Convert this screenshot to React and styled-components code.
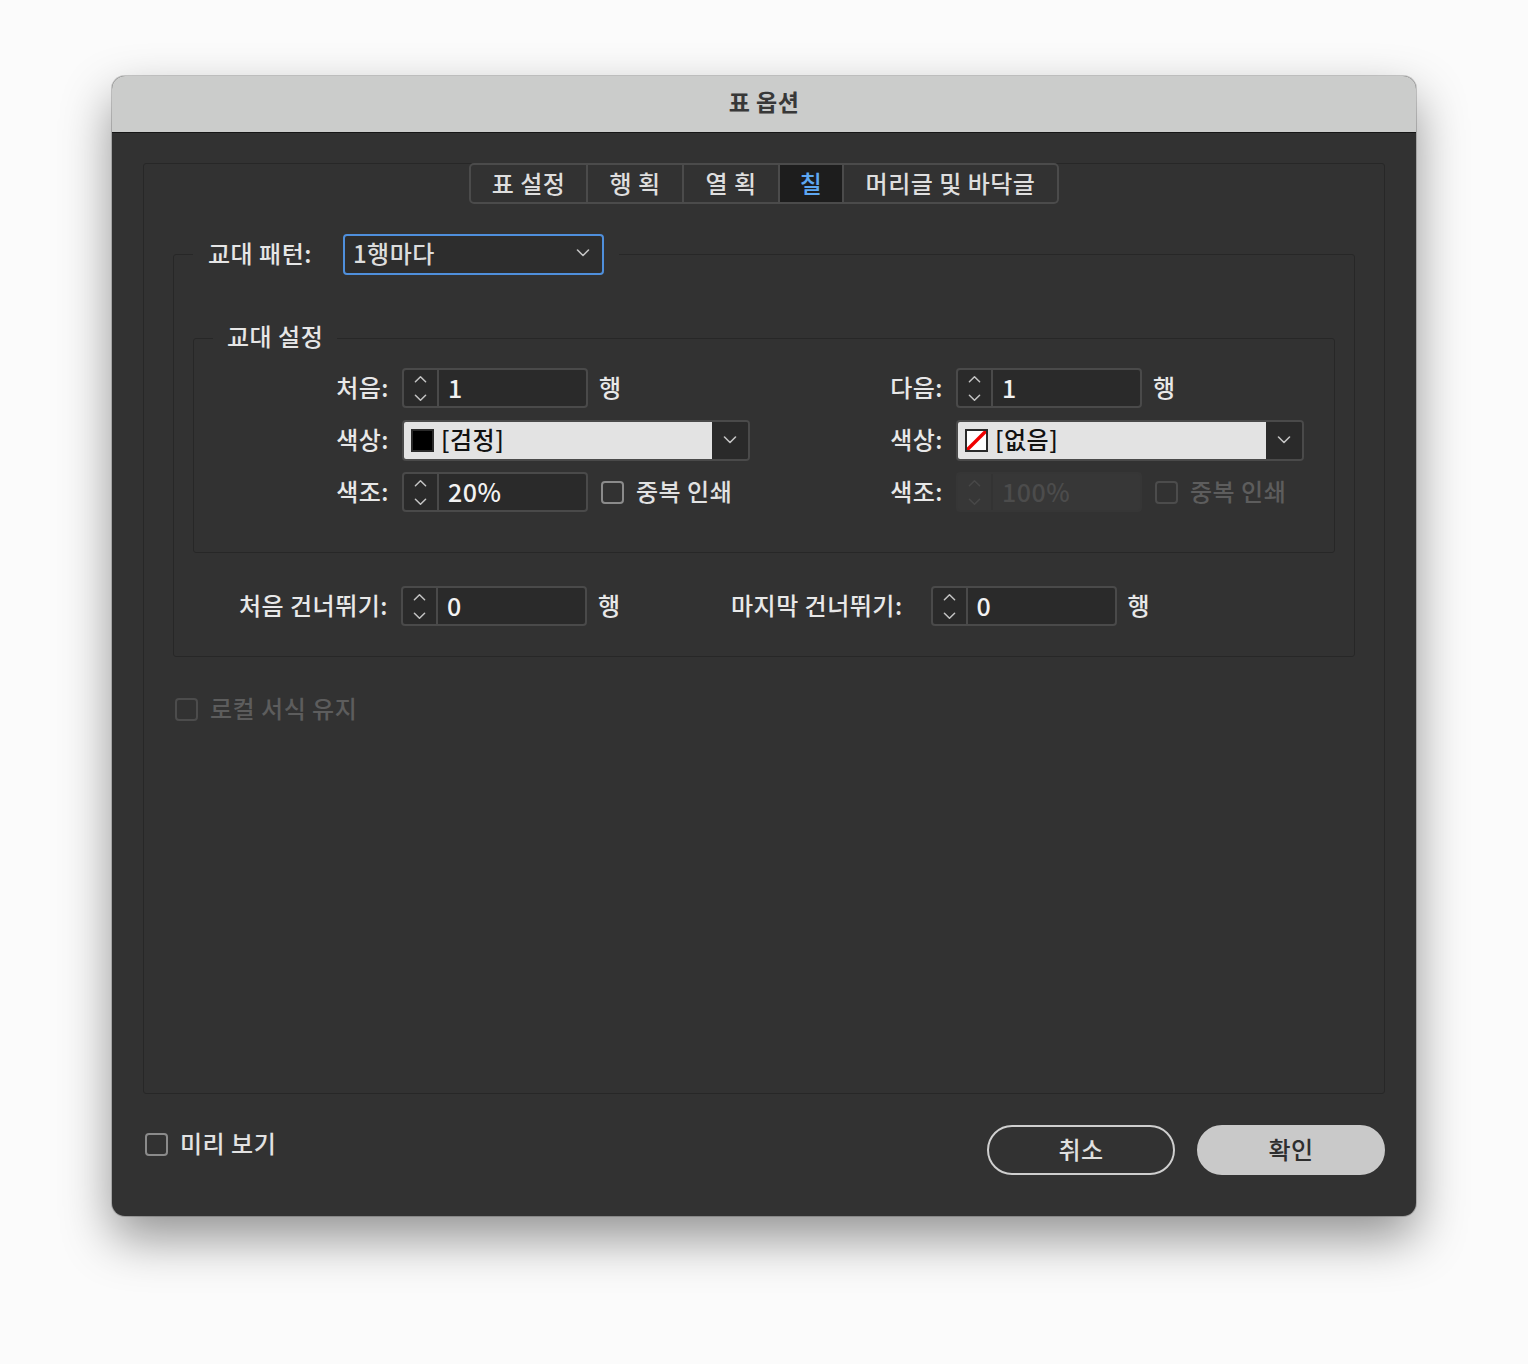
import styled, { createGlobalStyle } from "styled-components";

const GlobalStyle = createGlobalStyle`
  html, body {
    margin: 0;
    padding: 0;
    background: #fbfbfb;
  }
  body {
    font-family: "Noto Sans CJK KR", "Noto Sans", sans-serif;
    font-weight: 500;
    letter-spacing: 0.5px;
  }
  * {
    box-sizing: border-box;
  }
`;

const Page = styled.div`
  width: 1528px;
  height: 1364px;
  padding: 76px 0 0 112px;
`;

const Window = styled.div`
  width: 1304px;
  height: 1140px;
  border-radius: 13px;
  overflow: hidden;
  background: #323232;
  display: flex;
  flex-direction: column;
  box-shadow: 0 22px 50px rgba(0, 0, 0, 0.42), 0 0 0 1px rgba(0, 0, 0, 0.18);
`;

const TitleBar = styled.div`
  height: 57px;
  flex-shrink: 0;
  background: #cbcccb;
  border-bottom: 1px solid #161616;
  display: flex;
  align-items: center;
  justify-content: center;
  font-size: 23px;
  font-weight: 700;
  color: #383838;
  padding-bottom: 6px;
`;

const Body = styled.div`
  flex: 1;
  padding: 30px 31px 41px;
  display: flex;
  flex-direction: column;
`;

const Panel = styled.div`
  height: 931px;
  border: 1px solid #272727;
  border-radius: 3px;
  padding: 0 29px;
  display: flex;
  flex-direction: column;
`;

const Tabs = styled.div`
  align-self: center;
  display: flex;
  height: 41px;
  margin-top: -1px;
  border: 2px solid #4b4b4b;
  border-radius: 5px;
  overflow: hidden;
`;

const Tab = styled.div`
  width: ${(p) => p.$w}px;
  display: flex;
  align-items: center;
  justify-content: center;
  padding-bottom: 3px;
  font-size: 24px;
  color: ${(p) => (p.$active ? "#5ea7f2" : "#dedede")};
  background: ${(p) => (p.$active ? "#1d1d1d" : "transparent")};
  & + & {
    border-left: 2px solid #4b4b4b;
  }
`;

const Group = styled.fieldset`
  margin: ${(p) => p.$mt}px 0 0;
  padding: ${(p) => p.$pad};
  border: 1px solid #272727;
  border-radius: 3px;
  min-width: 0;
`;

const Legend = styled.legend`
  margin-left: ${(p) => p.$ml || 0}px;
  padding: 0 ${(p) => p.$px}px;
  display: flex;
  align-items: center;
  gap: 31px;
  font-size: 24px;
  line-height: 26px;
  color: #e6e6e6;
`;

const LegendText = styled.span`
  padding-bottom: 4px;
`;

const Select = styled.div`
  width: 261px;
  height: 41px;
  border: 2px solid #4f8fdc;
  border-radius: 4px;
  background: #2d2d2d;
  display: flex;
  align-items: center;
  justify-content: space-between;
  padding: 0 12px 3px 8px;
  font-size: 24px;
  color: #dcdcdc;
`;

const Grid = styled.div`
  display: grid;
  grid-template-columns: 195px 460px 68px 348px;
  grid-auto-rows: 40px;
  column-gap: 13px;
  row-gap: 12px;
`;

const Label = styled.div`
  width: ${(p) => (p.$w ? `${p.$w}px` : "auto")};
  flex-shrink: 0;
  text-align: right;
  align-self: center;
  padding-bottom: 3px;
  font-size: 24px;
  color: #e8e8e8;
  white-space: nowrap;
`;

const Cell = styled.div`
  display: flex;
  align-items: center;
`;

const SpinBox = styled.div`
  width: 186px;
  height: 40px;
  flex-shrink: 0;
  display: flex;
  border: 2px solid ${(p) => (p.$disabled ? "#363636" : "#4a4a4a")};
  border-radius: 4px;
  background: ${(p) => (p.$disabled ? "#373737" : "#2a2a2a")};
  margin-left: ${(p) => p.$ml || 0}px;
`;

const SpinButtons = styled.div`
  width: 35px;
  border-right: 2px solid ${(p) => (p.$disabled ? "#333" : "#4a4a4a")};
  display: flex;
  flex-direction: column;
  align-items: center;
  justify-content: space-between;
  padding: 5px 0 4px;
`;

const SpinValue = styled.div`
  flex: 1;
  display: flex;
  align-items: center;
  padding: 0 0 2px 9px;
  font-size: 25px;
  color: ${(p) => (p.$disabled ? "#4c4c4c" : "#f2f2f2")};
`;

const Unit = styled.span`
  margin-left: 11px;
  padding-bottom: 3px;
  font-size: 24px;
  color: #e8e8e8;
`;

const ColorSelect = styled.div`
  width: 348px;
  height: 41px;
  display: flex;
  border: 2px solid #4a4a4a;
  border-radius: 4px;
  overflow: hidden;
`;

const ColorField = styled.div`
  flex: 1;
  background: #e3e3e3;
  display: flex;
  align-items: center;
  gap: 7px;
  padding-left: 7px;
  font-size: 24px;
  color: #111;
`;

const FieldText = styled.span`
  padding-bottom: 3px;
`;

const ColorArrow = styled.div`
  width: 36px;
  background: #2a2a2a;
  display: flex;
  align-items: center;
  justify-content: center;
`;

const Swatch = styled.div`
  width: 23px;
  height: 23px;
  border: 2px solid #2a2a2a;
  background: ${(p) => p.$color};
  display: flex;
`;

const CheckRow = styled.label`
  display: flex;
  align-items: center;
  gap: 12px;
  margin-left: ${(p) => p.$ml || 0}px;
  margin-top: ${(p) => p.$mt || 0}px;
  align-self: ${(p) => p.$self || "auto"};
  font-size: 24px;
  color: ${(p) => (p.$disabled ? "#5d5d5d" : "#e2e2e2")};
  & > span:last-child {
    padding-bottom: 3px;
  }
`;

const Box = styled.span`
  width: 23px;
  height: 23px;
  border: 2px solid ${(p) => (p.$disabled ? "#4c4c4c" : "#8b8b8b")};
  border-radius: 4px;
  flex-shrink: 0;
`;

const SkipRow = styled.div`
  margin-top: 33px;
  height: 40px;
  display: flex;
  align-items: center;
`;

const Footer = styled.div`
  margin-top: 31px;
  display: flex;
  align-items: flex-start;
`;

const Buttons = styled.div`
  margin-left: auto;
  display: flex;
  gap: 22px;
`;

const Button = styled.button`
  width: 188px;
  height: 50px;
  border-radius: 25px;
  padding: 0 0 3px;
  font-family: inherit;
  font-weight: 500;
  font-size: 24px;
  letter-spacing: 0.5px;
  border: 2px solid ${(p) => (p.$primary ? "#c9c9c9" : "#cfcfcf")};
  background: ${(p) => (p.$primary ? "#c9c9c9" : "transparent")};
  color: ${(p) => (p.$primary ? "#2e2e2e" : "#e0e0e0")};
`;

const Chevron = ({ up, color = "#c4c4c4", w = 14 }) => (
  <svg width={w} height="8" viewBox="0 0 14 8">
    <path
      d={up ? "M1.5 7 L7 1.5 L12.5 7" : "M1.5 1 L7 6.5 L12.5 1"}
      fill="none"
      stroke={color}
      strokeWidth="1.6"
      strokeLinecap="round"
      strokeLinejoin="round"
    />
  </svg>
);

const Spinner = ({ value, disabled, ml }) => (
  <SpinBox $disabled={disabled} $ml={ml}>
    <SpinButtons $disabled={disabled}>
      <Chevron up color={disabled ? "#484848" : "#c4c4c4"} w={13} />
      <Chevron color={disabled ? "#484848" : "#c4c4c4"} w={13} />
    </SpinButtons>
    <SpinValue $disabled={disabled}>{value}</SpinValue>
  </SpinBox>
);

const NoneSwatch = () => (
  <Swatch $color="#fff">
    <svg width="19" height="19" viewBox="0 0 19 19">
      <line x1="0" y1="19" x2="19" y2="0" stroke="#f00000" strokeWidth="3.4" />
    </svg>
  </Swatch>
);

const ColorDropdown = ({ swatch, text }) => (
  <ColorSelect>
    <ColorField>
      {swatch}
      <FieldText>{text}</FieldText>
    </ColorField>
    <ColorArrow>
      <Chevron />
    </ColorArrow>
  </ColorSelect>
);

const Check = ({ children, disabled, ...rest }) => (
  <CheckRow $disabled={disabled} {...rest}>
    <Box $disabled={disabled} />
    <span>{children}</span>
  </CheckRow>
);

const tabs = [
  { label: "표 설정", w: 115 },
  { label: "행 획", w: 96 },
  { label: "열 획", w: 96 },
  { label: "칠", w: 64, active: true },
  { label: "머리글 및 바닥글", w: 215 },
];

export default function App() {
  return (
    <>
      <GlobalStyle />
      <Page>
        <Window>
          <TitleBar>표 옵션</TitleBar>
          <Body>
            <Panel>
              <Tabs>
                {tabs.map((t) => (
                  <Tab key={t.label} $w={t.w} $active={t.active}>
                    {t.label}
                  </Tab>
                ))}
              </Tabs>

              <Group $mt={30} $pad="0 19px 30px">
                <Legend $px={15}>
                  <LegendText>교대 패턴:</LegendText>
                  <Select>
                    <span>1행마다</span>
                    <Chevron />
                  </Select>
                </Legend>

                <Group $mt={48} $pad="15px 0 40px">
                  <Legend $ml={19} $px={14}>
                    <LegendText>교대 설정</LegendText>
                  </Legend>
                  <Grid>
                    <Label>처음:</Label>
                    <Cell>
                      <Spinner value="1" />
                      <Unit>행</Unit>
                    </Cell>
                    <Label>다음:</Label>
                    <Cell>
                      <Spinner value="1" />
                      <Unit>행</Unit>
                    </Cell>

                    <Label>색상:</Label>
                    <Cell>
                      <ColorDropdown swatch={<Swatch $color="#000" />} text="[검정]" />
                    </Cell>
                    <Label>색상:</Label>
                    <Cell>
                      <ColorDropdown swatch={<NoneSwatch />} text="[없음]" />
                    </Cell>

                    <Label>색조:</Label>
                    <Cell>
                      <Spinner value="20%" />
                      <Check $ml={13}>중복 인쇄</Check>
                    </Cell>
                    <Label>색조:</Label>
                    <Cell>
                      <Spinner value="100%" disabled />
                      <Check $ml={13} disabled>
                        중복 인쇄
                      </Check>
                    </Cell>
                  </Grid>
                </Group>

                <SkipRow>
                  <Label $w={195}>처음 건너뛰기:</Label>
                  <Spinner value="0" ml={13} />
                  <Unit>행</Unit>
                  <Label $w={282}>마지막 건너뛰기:</Label>
                  <Spinner value="0" ml={28} />
                  <Unit>행</Unit>
                </SkipRow>
              </Group>

              <Check disabled $ml={2} $mt={33} $self="flex-start">
                로컬 서식 유지
              </Check>
            </Panel>

            <Footer>
              <Check $ml={2} $mt={0}>
                미리 보기
              </Check>
              <Buttons>
                <Button>취소</Button>
                <Button $primary>확인</Button>
              </Buttons>
            </Footer>
          </Body>
        </Window>
      </Page>
    </>
  );
}
